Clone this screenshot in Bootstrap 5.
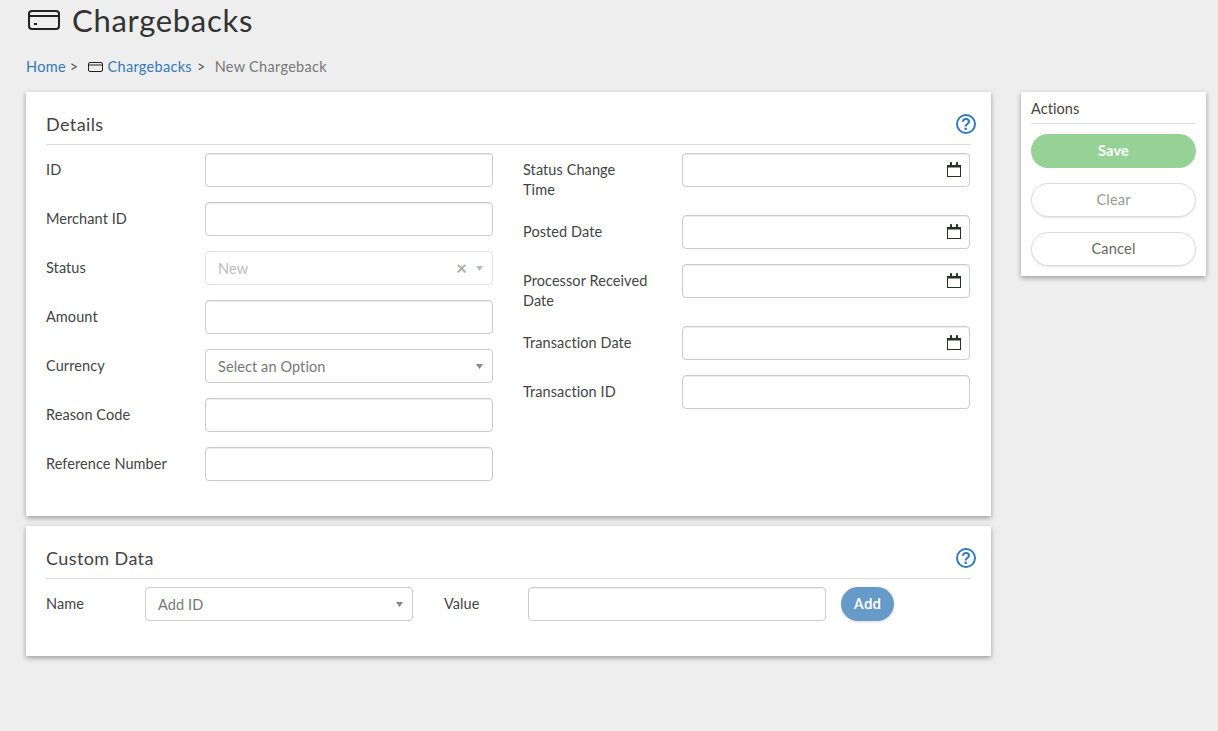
<!DOCTYPE html>
<html lang="en">
<head>
<meta charset="utf-8">
<title>Chargebacks</title>
<link href="https://cdn.jsdelivr.net/npm/bootstrap@5.3.0/dist/css/bootstrap.min.css" rel="stylesheet">
<style>
html, body { height: 100%; }
body { background: #eeeeee; color: #444; font-family: Lato, "Liberation Sans", sans-serif; font-size: 14.5px; line-height: 20px; letter-spacing: .08px; overflow: hidden; }
a { color: #337ab7; text-decoration: none; }
.shell { padding: 0 12px 0 26px; }
.page-head { height: 40px; padding-left: 2px; gap: 12px; color: #333; }
.page-head h1 { font-size: 31px; line-height: 40px; margin: 0; font-weight: 400; letter-spacing: .7px; font-family: inherit; }
.crumbs { margin-top: 17px; height: 20px; color: #777; margin-bottom: 15px; letter-spacing: .3px; }
.crumbs .sep { color: #555; margin: 0 4px 0 4px; }
.crumbs .sep-next { margin: 0 4px 0 5px; }
.crumb-icon { margin: 0 5px 0 5px; }
.crumb-last { margin-left: 5px; }
.sheet { background: #fff; border: 0; border-radius: 0; box-shadow: 0 2px 5px rgba(0,0,0,.35); }
.main-col { width: 965px; }
.details { height: 424px; padding: 20px; margin-bottom: 10px; }
.custom { height: 130px; padding: 20px; }
.side-col { width: 185px; height: 184px; padding: 7px 10px 10px; margin-left: 30px; }
.sheet-title { height: 33px; border-bottom: 1px solid #ddd; margin-bottom: 8px; font-size: 18px; line-height: 24px; letter-spacing: .4px; }
.side-title { height: 25px; border-bottom: 1px solid #ddd; margin-bottom: 10px; line-height: 20px; }
.form-grid { display: grid; grid-template-columns: 447px 447px; column-gap: 30px; }
.field { display: flex; margin-bottom: 15px; }
.field-label { width: 159px; flex: none; padding: 7px 33px 0 0; }
.field-box { width: 288px; flex: none; position: relative; }
.form-control.ctl, .form-select.ctl { height: 34px; border: 1px solid #ccc; border-radius: 4px; box-shadow: inset 0 1px 1px rgba(0,0,0,.075); font-size: 14.5px; padding: 6px 12px; color: #777; letter-spacing: .1px; }
.form-select.ctl { background-image: url("data:image/svg+xml,%3Csvg xmlns='http://www.w3.org/2000/svg' width='8' height='5'%3E%3Cpath d='M0 0h8L4 5z' fill='%23888'/%3E%3C/svg%3E"); background-position: right 9px center; background-size: 7px 5px; box-shadow: none; }
.form-select.ctl:disabled { background-color: #fff; color: #bbb; border-color: #e4e4e4; background-image: url("data:image/svg+xml,%3Csvg xmlns='http://www.w3.org/2000/svg' width='8' height='5'%3E%3Cpath d='M0 0h8L4 5z' fill='%23bbb'/%3E%3C/svg%3E"); }
.cal { position: absolute; right: 9px; top: 9px; }
.clear-x { position: absolute; right: 26px; top: 7px; color: #aaa; font-size: 19px; font-weight: 700; line-height: 20px; }
.help { display: block; margin: 2px -5px 0 0; }
.pill { display: block; width: 100%; height: 34px; border-radius: 17px; font-size: 14.5px; line-height: 20px; padding: 6px 12px; margin-bottom: 15px; letter-spacing: .2px; }
.pill-save { background: #96d296; border: 0; color: #fff; font-weight: 700; }
.pill-plain { background: #fff; border: 1px solid #ddd; color: #666; box-shadow: 0 1px 2px rgba(0,0,0,.1); }
.pill-muted { color: #999; }
.pill-add { width: 53px; margin: 0 0 0 15px; background: #659ac9; border: 0; color: #fff; font-family: Roboto, sans-serif; font-size: 15px; font-weight: 500; padding: 0; box-shadow: 0 1px 3px rgba(0,0,0,.15); }
.cd-label-a { width: 99px; padding-top: 7px; }
.cd-select { width: 268px; }
.cd-label-b { width: 115px; padding: 7px 0 0 31px; }
.cd-input { width: 298px; }
</style>
</head>
<body>
<div class="shell">
  <div class="page-head d-flex align-items-center">
    <svg width="32" height="20" viewBox="0 0 32 20" fill="none" stroke="#222" stroke-width="2"><rect x="1" y="1" width="30" height="18" rx="3"/><path d="M1 6h30"/><path d="M6 14h3"/></svg>
    <h1>Chargebacks</h1>
  </div>
  <div class="crumbs d-flex align-items-center">
    <a href="#">Home</a><span class="sep">&gt;</span>
    <svg class="crumb-icon" width="15" height="10" viewBox="0 0 15 10" fill="none" stroke="#222" stroke-width="1"><rect x=".5" y=".5" width="14" height="9" rx="1.5"/><path d="M.5 3h14"/></svg>
    <a href="#">Chargebacks</a><span class="sep sep-next">&gt;</span><span class="crumb-last">New Chargeback</span>
  </div>
  <div class="d-flex align-items-start">
    <div class="main-col">
      <div class="sheet details">
        <div class="sheet-title d-flex justify-content-between">
          <span>Details</span>
          <svg class="help" width="20" height="20" viewBox="0 0 20 20"><circle cx="10" cy="10" r="9" fill="none" stroke="#337ab7" stroke-width="2"/><text x="10" y="15.500" text-anchor="middle" fill="#337ab7" font-family="Liberation Sans" font-weight="700" font-size="16">?</text></svg>
        </div>
        <div class="form-grid">
          <div>
            <div class="field"><div class="field-label">ID</div><div class="field-box"><input class="form-control ctl"></div></div>
            <div class="field"><div class="field-label">Merchant ID</div><div class="field-box"><input class="form-control ctl"></div></div>
            <div class="field"><div class="field-label">Status</div><div class="field-box"><select class="form-select ctl" disabled><option>New</option></select><span class="clear-x">×</span></div></div>
            <div class="field"><div class="field-label">Amount</div><div class="field-box"><input class="form-control ctl"></div></div>
            <div class="field"><div class="field-label">Currency</div><div class="field-box"><select class="form-select ctl"><option>Select an Option</option></select></div></div>
            <div class="field"><div class="field-label">Reason Code</div><div class="field-box"><input class="form-control ctl"></div></div>
            <div class="field"><div class="field-label">Reference Number</div><div class="field-box"><input class="form-control ctl"></div></div>
          </div>
          <div>
            <div class="field"><div class="field-label">Status Change Time</div><div class="field-box"><input class="form-control ctl"><svg class="cal" width="14" height="15" viewBox="0 0 14 15" fill="none" stroke="#243324"><rect x=".5" y="3.500" width="13" height="11" fill="#fff"/><path d="M.5 4.500h13" stroke-width="2"/><path d="M3.500 .5h1v3h-1zM9.500 .5h1v3h-1z" fill="#243324"/></svg></div></div>
            <div class="field"><div class="field-label">Posted Date</div><div class="field-box"><input class="form-control ctl"><svg class="cal" width="14" height="15" viewBox="0 0 14 15" fill="none" stroke="#243324"><rect x=".5" y="3.500" width="13" height="11" fill="#fff"/><path d="M.5 4.500h13" stroke-width="2"/><path d="M3.500 .5h1v3h-1zM9.500 .5h1v3h-1z" fill="#243324"/></svg></div></div>
            <div class="field"><div class="field-label">Processor Received Date</div><div class="field-box"><input class="form-control ctl"><svg class="cal" width="14" height="15" viewBox="0 0 14 15" fill="none" stroke="#243324"><rect x=".5" y="3.500" width="13" height="11" fill="#fff"/><path d="M.5 4.500h13" stroke-width="2"/><path d="M3.500 .5h1v3h-1zM9.500 .5h1v3h-1z" fill="#243324"/></svg></div></div>
            <div class="field"><div class="field-label">Transaction Date</div><div class="field-box"><input class="form-control ctl"><svg class="cal" width="14" height="15" viewBox="0 0 14 15" fill="none" stroke="#243324"><rect x=".5" y="3.500" width="13" height="11" fill="#fff"/><path d="M.5 4.500h13" stroke-width="2"/><path d="M3.500 .5h1v3h-1zM9.500 .5h1v3h-1z" fill="#243324"/></svg></div></div>
            <div class="field"><div class="field-label">Transaction ID</div><div class="field-box"><input class="form-control ctl"></div></div>
          </div>
        </div>
      </div>
      <div class="sheet custom">
        <div class="sheet-title d-flex justify-content-between">
          <span>Custom Data</span>
          <svg class="help" width="20" height="20" viewBox="0 0 20 20"><circle cx="10" cy="10" r="9" fill="none" stroke="#337ab7" stroke-width="2"/><text x="10" y="15.500" text-anchor="middle" fill="#337ab7" font-family="Liberation Sans" font-weight="700" font-size="16">?</text></svg>
        </div>
        <div class="d-flex">
          <div class="cd-label-a">Name</div>
          <div class="cd-select"><select class="form-select ctl"><option>Add ID</option></select></div>
          <div class="cd-label-b">Value</div>
          <div class="cd-input"><input class="form-control ctl"></div>
          <button class="pill pill-add" type="button">Add</button>
        </div>
      </div>
    </div>
    <div class="sheet side-col">
      <div class="side-title">Actions</div>
      <button class="pill pill-save" type="button">Save</button>
      <button class="pill pill-plain pill-muted" type="button">Clear</button>
      <button class="pill pill-plain" type="button">Cancel</button>
    </div>
  </div>
</div>
<script src="https://cdn.jsdelivr.net/npm/bootstrap@5.3.0/dist/js/bootstrap.bundle.min.js"></script>
</body>
</html>
